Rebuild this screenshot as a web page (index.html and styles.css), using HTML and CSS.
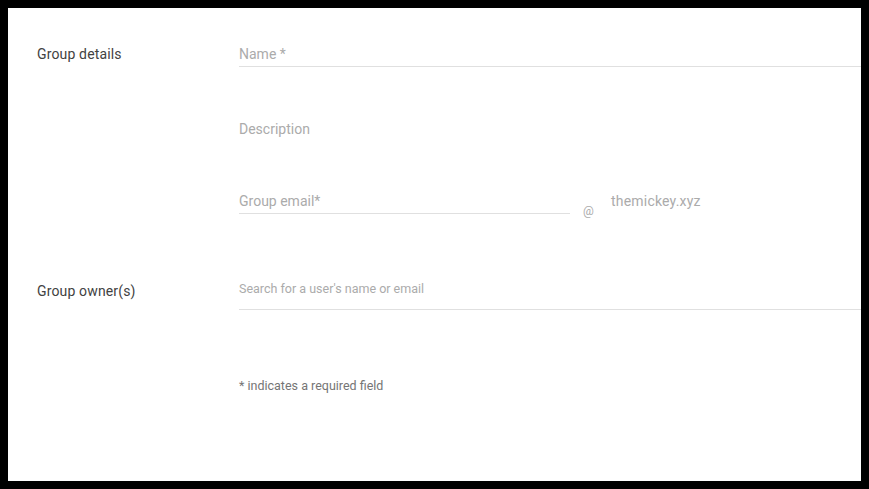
FILE: index.html
```html
<!DOCTYPE html>
<html lang="en">
  <head>
    <meta charset="utf-8">
    <title>Create group</title>
    <link rel="stylesheet" href="styles.css">
  </head>
  <body>
    <div class="form">
      <div class="row">
        <div class="label">Group details</div>
        <div class="fields">
          <div class="field">Name *</div>
          <div class="field desc">Description</div>
          <div class="emailRow">
            <div class="field email">Group email*</div>
            <span class="at">@</span>
            <span class="domain">themickey.xyz</span>
          </div>
        </div>
      </div>

      <div class="row owners">
        <div class="label">Group owner(s)</div>
        <div class="fields">
          <div class="field search">Search for a user's name or email</div>
        </div>
      </div>

      <p class="note">* indicates a required field</p>
    </div>
  </body>
</html>
```

FILE: styles.css
```css
html{
  background-color: #000;
}
body{
  margin: 8px;
  height: 473px;
  overflow: hidden;
  background-color: #fff;
  font-family: Roboto, "Liberation Sans", sans-serif;
}
.form{
  padding: 36px 0 0 29px;
}
.row{
  display: flex;
}
.label{
  flex: none;
  width: 202px;
  font-size: 14px;
  line-height: 20px;
  letter-spacing: 0.15px;
  color: #424242;
}
.fields{
  flex: 1;
}
.field{
  font-size: 14px;
  line-height: 20px;
  color: #ababab;
  padding-bottom: 2px;
  border-bottom: 1px solid #e0e0e0;
}
.desc{
  margin-top: 52px;
  border-bottom: none;
}
.emailRow{
  display: flex;
  align-items: flex-start;
  margin-top: 50px;
}
.email{
  flex: none;
  width: 331px;
}
.at{
  width: 28px;
  margin: 12px 0 0 13px;
  font-size: 12px;
  line-height: 16px;
  color: #ababab;
}
.domain{
  font-size: 14px;
  line-height: 20px;
  letter-spacing: 0.2px;
  color: #ababab;
}
.owners{
  margin-top: 62px;
}
.search{
  font-size: 12.5px;
  line-height: 16px;
  padding-bottom: 12px;
}
.note{
  margin: 68px 0 0 202px;
  font-size: 12.5px;
  line-height: 16px;
  color: #757575;
}
```
